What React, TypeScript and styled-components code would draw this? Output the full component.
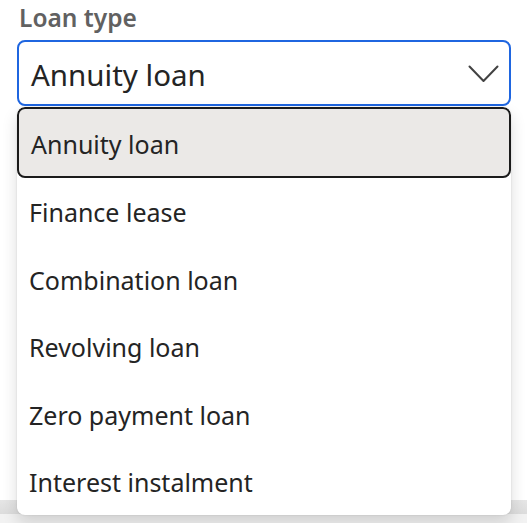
import React from "react";
import styled, { createGlobalStyle } from "styled-components";

const Global = createGlobalStyle`
  html, body { margin: 0; padding: 0; background: #ffffff; }
  body { font-family: "Noto Sans", "Open Sans", sans-serif; }
`;

const Page = styled.div`
  position: relative;
  min-height: 523px;
  display: flex;
  flex-direction: column;
  overflow: hidden;
`;

const Field = styled.div`
  display: flex;
  flex-direction: column;
  padding: 1px 16px 0 17px;
`;

const Label = styled.label`
  font-size: 24.5px;
  line-height: 33px;
  font-weight: 600;
  color: #616161;
  padding-left: 2px;
  margin-bottom: 6px;
`;

const Trigger = styled.button`
  box-sizing: border-box;
  width: 494px;
  height: 66px;
  display: flex;
  align-items: center;
  justify-content: space-between;
  padding: 0 10px 0 12px;
  border: 2px solid #1f66e0;
  border-radius: 8px;
  background: #ffffff;
  font-family: inherit;
  font-size: 29.5px;
  color: #242424;
  text-align: left;
`;

const Value = styled.span`
  padding-top: 2px;
`;

const Chevron = styled.svg`
  width: 31px;
  height: 18px;
  flex: none;
  margin-top: 1px;
`;

const Listbox = styled.ul`
  position: absolute;
  top: 107px;
  left: 17px;
  width: 494px;
  height: 408px;
  margin: 0;
  padding: 0;
  list-style: none;
  background: #ffffff;
  border-radius: 8px;
  box-shadow: 0 0 2px rgba(0, 0, 0, 0.12), 0 8px 16px rgba(0, 0, 0, 0.14);
  overflow: hidden;
`;

const Option = styled.li<{ $selected?: boolean }>`
  box-sizing: border-box;
  display: flex;
  align-items: center;
  height: ${(p) => (p.$selected ? "71px" : "67.5px")};
  margin-bottom: ${(p) => (p.$selected ? "0.5px" : "0")};
  padding-left: 12px;
  padding-top: ${(p) => (p.$selected ? "2px" : "0")};
  font-size: 25px;
  color: #242424;
  background: ${(p) => (p.$selected ? "#ebe9e7" : "transparent")};
  border: ${(p) => (p.$selected ? "2px solid #1b1b1b" : "none")};
  border-radius: ${(p) => (p.$selected ? "8px" : "0")};
`;

const Footer = styled.div`
  margin-top: auto;
  display: flex;
  flex-direction: column;
`;

const FooterBar = styled.div`
  height: 14px;
  background: linear-gradient(#e6e6e6, #dcdcdc);
`;

const FooterBase = styled.div`
  height: 9px;
  background: #f2f2f2;
`;

const options = [
  "Annuity loan",
  "Finance lease",
  "Combination loan",
  "Revolving loan",
  "Zero payment loan",
  "Interest instalment",
];

export default function App() {
  return (
    <>
      <Global />
      <Page>
        <Field>
          <Label>Loan type</Label>
          <Trigger>
            <Value>Annuity loan</Value>
            <Chevron viewBox="0 0 31 18" fill="none">
              <polyline
                points="1.5,1.5 15.5,16 29.5,1.5"
                stroke="#424242"
                strokeWidth="2"
                strokeLinecap="round"
                strokeLinejoin="round"
              />
            </Chevron>
          </Trigger>
        </Field>
        <Footer>
          <FooterBar />
          <FooterBase />
        </Footer>
        <Listbox>
          {options.map((o, i) => (
            <Option key={o} $selected={i === 0}>
              {o}
            </Option>
          ))}
        </Listbox>
      </Page>
    </>
  );
}
